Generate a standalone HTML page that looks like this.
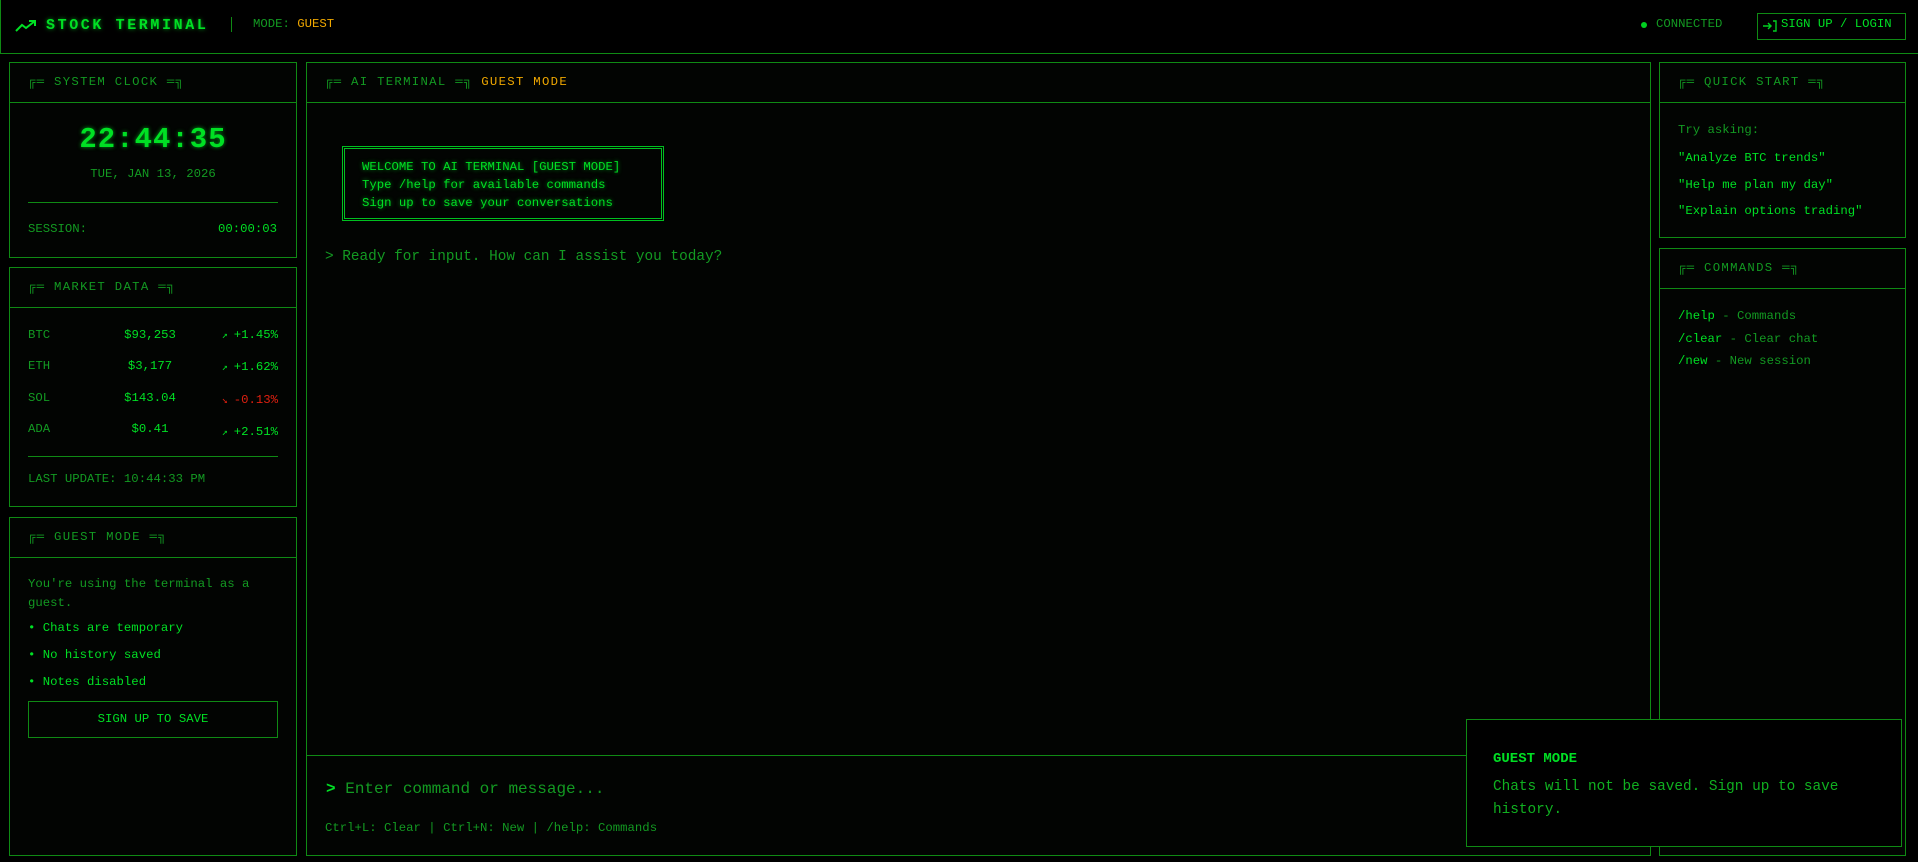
<!DOCTYPE html>
<html><head><meta charset="utf-8"><style>
*{margin:0;padding:0;box-sizing:border-box}
html,body{width:1918px;height:862px;background:#000;overflow:hidden}
body{position:relative;font-family:"Liberation Mono","DejaVu Sans Mono",monospace;color:#00dd22;font-size:12.3px}
.a{position:absolute;white-space:nowrap}
.p{position:absolute;border:1px solid #0f8a14;background:#020402}
.hd{position:absolute;left:0;right:0;top:0;height:40px;border-bottom:1px solid #0f8a14}
.tt{position:absolute;left:18px;top:12px;color:#139a22;letter-spacing:1.3px;font-size:12.3px}
.dim{color:#139a22}
.br{color:#00e024}
.gl{text-shadow:0 0 4px rgba(0,255,40,.6)}
.ar{font-size:10px;display:inline-block;width:12px;text-align:left}
</style></head><body>
<!-- header -->
<div class="a" style="left:0;top:0;width:1918px;height:54px;border-bottom:1px solid #0f8a14;border-left:1px solid #0f8a14"></div>
<svg class="a" style="left:15px;top:19px" width="22" height="13" viewBox="0 0 22 13"><path d="M1 12 L7 6 L11 9 L20 2 M14 2 H20 V7" fill="none" stroke="#00e024" stroke-width="2"/></svg>
<div class="a br gl" style="left:46px;top:17px;font-size:15px;font-weight:bold;letter-spacing:2.6px">STOCK TERMINAL</div>
<div class="a" style="left:231px;top:17px;width:1px;height:15px;background:#0f8a14"></div>
<div class="a dim" style="left:253px;top:17px">MODE: <span style="color:#f0a800">GUEST</span></div>
<div class="a" style="left:1641px;top:22px;width:6px;height:6px;border-radius:50%;background:#00d020"></div>
<div class="a dim" style="left:1656px;top:17px">CONNECTED</div>
<div class="a" style="left:1757px;top:13px;width:149px;height:27px;border:1px solid #0f8a14"></div>
<svg class="a" style="left:1762px;top:19px" width="16" height="14" viewBox="0 0 16 14"><path d="M1 7 H9 M6 4 L9 7 L6 10 M11 2 H14 V12 H11" fill="none" stroke="#00d020" stroke-width="1.4"/></svg>
<div class="a br" style="left:1781px;top:17px">SIGN UP / LOGIN</div>

<!-- clock -->
<div class="p" style="left:9px;top:62px;width:288px;height:196px"><div class="hd"></div><div class="tt">╔═ SYSTEM CLOCK ═╗</div></div>
<div class="a br gl" style="left:9px;width:288px;text-align:center;top:123px;font-size:29px;font-weight:bold;letter-spacing:1px">22:44:35</div>
<div class="a dim" style="left:9px;width:288px;text-align:center;top:167px">TUE, JAN 13, 2026</div>
<div class="a" style="left:28px;top:202px;width:250px;height:1px;background:#0f8a14"></div>
<div class="a dim" style="left:28px;top:222px">SESSION:</div>
<div class="a br" style="left:218px;top:222px">00:00:03</div>

<!-- market -->
<div class="p" style="left:9px;top:267px;width:288px;height:240px"><div class="hd"></div><div class="tt">╔═ MARKET DATA ═╗</div></div>
<div class="a dim" style="left:28px;top:320px;line-height:31.3px">BTC<br>ETH<br>SOL<br>ADA</div>
<div class="a br" style="left:110px;width:80px;text-align:center;top:320px;line-height:31.3px">$93,253<br>$3,177<br>$143.04<br>$0.41</div>
<div class="a" style="left:208px;top:320px;line-height:31.3px;text-align:right;width:70px"><div><span class="br ar">↗</span><span class="br">+1.45%</span></div><div><span class="br ar">↗</span><span class="br">+1.62%</span></div><div><span class="ar" style="color:#e02010">↘</span><span style="color:#e02010">-0.13%</span></div><div><span class="br ar">↗</span><span class="br">+2.51%</span></div></div>
<div class="a" style="left:28px;top:456px;width:250px;height:1px;background:#0f8a14"></div>
<div class="a dim" style="left:28px;top:472px">LAST UPDATE: 10:44:33 PM</div>

<!-- guest -->
<div class="p" style="left:9px;top:517px;width:288px;height:339px"><div class="hd"></div><div class="tt">╔═ GUEST MODE ═╗</div></div>
<div class="a dim" style="left:28px;top:575px;line-height:18.5px">You're using the terminal as a<br>guest.</div>
<div class="a br" style="left:28px;top:615px;line-height:27px">• Chats are temporary<br>• No history saved<br>• Notes disabled</div>
<div class="a br" style="left:28px;top:701px;width:250px;height:37px;border:1px solid #0f8a14;text-align:center;line-height:35px">SIGN UP TO SAVE</div>

<!-- center -->
<div class="p" style="left:306px;top:62px;width:1345px;height:794px"><div class="hd"></div><div class="tt">╔═ AI TERMINAL ═╗ <span style="color:#f0a800">GUEST MODE</span></div>
<div class="a" style="left:0;right:0;top:692px;height:1px;background:#0f8a14"></div></div>
<div class="a gl" style="left:342px;top:146px;width:322px;height:75px;border:3px double #00c020"></div>
<div class="a br gl" style="left:362px;top:158px;line-height:18px">WELCOME TO AI TERMINAL [GUEST MODE]<br>Type /help for available commands<br>Sign up to save your conversations</div>
<div class="a dim" style="left:325px;top:249px;font-size:14.4px">&gt; Ready for input. How can I assist you today?</div>
<div class="a" style="left:326px;top:780px;font-size:16px"><span class="br" style="font-weight:bold">&gt;</span> <span class="dim">Enter command or message...</span></div>
<div class="a dim" style="left:325px;top:821px">Ctrl+L: Clear | Ctrl+N: New | /help: Commands</div>

<!-- right -->
<div class="p" style="left:1659px;top:62px;width:247px;height:176px"><div class="hd"></div><div class="tt">╔═ QUICK START ═╗</div></div>
<div class="a dim" style="left:1678px;top:123px">Try asking:</div>
<div class="a br" style="left:1678px;top:145px;line-height:26.7px">"Analyze BTC trends"<br>"Help me plan my day"<br>"Explain options trading"</div>
<div class="p" style="left:1659px;top:248px;width:247px;height:608px"><div class="hd"></div><div class="tt">╔═ COMMANDS ═╗</div></div>
<div class="a" style="left:1678px;top:305px;line-height:22.5px"><span class="br">/help</span><span class="dim"> - Commands</span><br><span class="br">/clear</span><span class="dim"> - Clear chat</span><br><span class="br">/new</span><span class="dim"> - New session</span></div>

<!-- toast -->
<div class="a" style="left:1466px;top:719px;width:436px;height:128px;border:1px solid #0f8a14;background:#000"></div>
<div class="a br" style="left:1493px;top:751px;font-weight:bold;font-size:14px">GUEST MODE</div>
<div class="a dim" style="left:1493px;top:776px;font-size:14.4px;line-height:23px;color:#10b020">Chats will not be saved. Sign up to save<br>history.</div>
</body></html>
